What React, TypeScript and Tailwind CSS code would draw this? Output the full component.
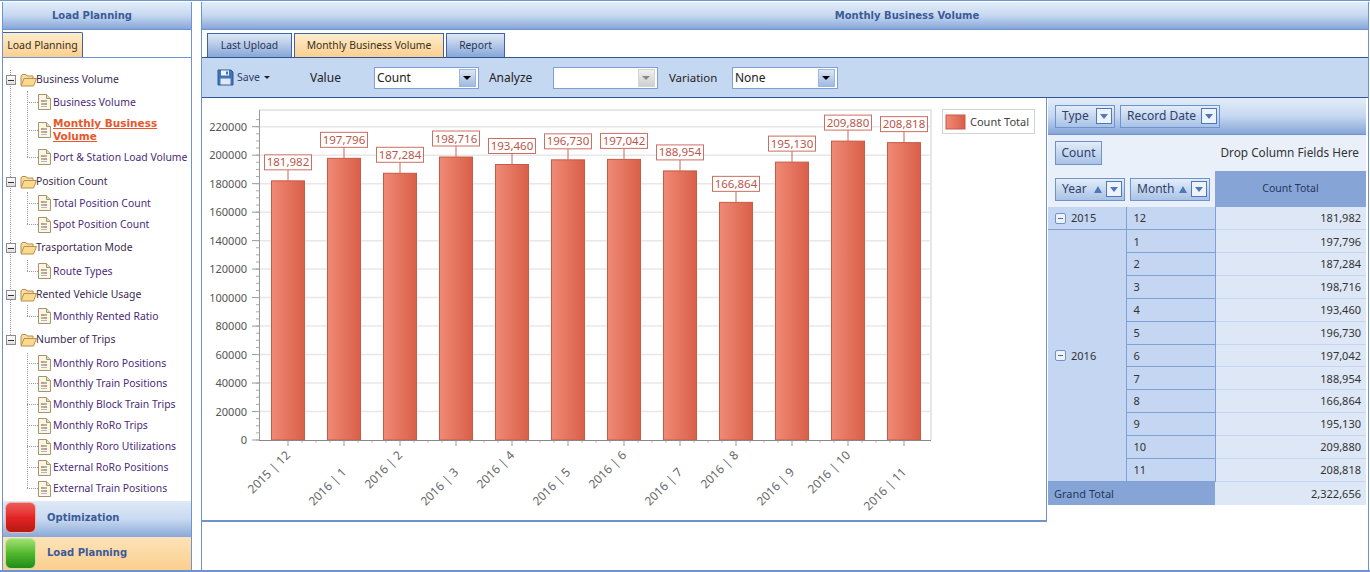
const headerBar =
  "bg-gradient-to-b from-[#e3edf9] via-[#c6d8f0] to-[#86a6d8] border-b border-[#6f93cc]";

const values = [
  { label: "2015 | 12", month: "12", n: 181982 },
  { label: "2016 | 1", month: "1", n: 197796 },
  { label: "2016 | 2", month: "2", n: 187284 },
  { label: "2016 | 3", month: "3", n: 198716 },
  { label: "2016 | 4", month: "4", n: 193460 },
  { label: "2016 | 5", month: "5", n: 196730 },
  { label: "2016 | 6", month: "6", n: 197042 },
  { label: "2016 | 7", month: "7", n: 188954 },
  { label: "2016 | 8", month: "8", n: 166864 },
  { label: "2016 | 9", month: "9", n: 195130 },
  { label: "2016 | 10", month: "10", n: 209880 },
  { label: "2016 | 11", month: "11", n: 208818 },
];

const tree = [
  {
    title: "Business Volume",
    cls: "h-[22px]",
    items: [
      { label: "Business Volume", cls: "h-[22px]" },
      { label: "Monthly Business Volume", cls: "mt-px h-[32px]", active: true },
      { label: "Port & Station Load Volume", cls: "h-[22px]" },
    ],
  },
  {
    title: "Position Count",
    cls: "mt-[3px] h-[22px]",
    items: [
      { label: "Total Position Count", cls: "-mt-px h-[22px]" },
      { label: "Spot Position Count", cls: "h-[21px]" },
    ],
  },
  {
    title: "Trasportation Mode",
    cls: "mt-[2px] h-[22px]",
    items: [{ label: "Route Types", cls: "mt-px h-[22px]" }],
  },
  {
    title: "Rented Vehicle Usage",
    cls: "mt-[2px] h-[22px]",
    items: [{ label: "Monthly Rented Ratio", cls: "-mt-px h-[22px]" }],
  },
  {
    title: "Number of Trips",
    cls: "mt-[2px] h-[22px]",
    items: [
      { label: "Monthly Roro Positions", cls: "mt-[2px] h-[20px]" },
      { label: "Monthly Train Positions", cls: "h-[21px]" },
      { label: "Monthly Block Train Trips", cls: "h-[21px]" },
      { label: "Monthly RoRo Trips", cls: "h-[21px]" },
      { label: "Monthly Roro Utilizations", cls: "h-[21px]" },
      { label: "External RoRo Positions", cls: "h-[21px]" },
      { label: "External Train Positions", cls: "h-[21px]" },
    ],
  },
];

const FolderIcon = () => (
  <svg width="17" height="14" viewBox="0 0 17 14" className="shrink-0">
    <path d="M1 12V3l1-1.500h4l1 1.500h6v2.500" fill="#f7dca6" stroke="#b98f4a" />
    <path d="M1 13l3-7.500h12.500L13.500 13z" fill="#fbd98e" stroke="#b98f4a" />
  </svg>
);

const DocIcon = () => (
  <svg width="13" height="16" viewBox="0 0 13 16" className="shrink-0">
    <path d="M.5.500h8l4 4v11H.5z" fill="#fbf6e6" stroke="#a89468" />
    <path d="M8.500.500v4h4" fill="#e8dcb8" stroke="#a89468" />
    <rect x="3" y="6" width="3" height="2" fill="#e58b8b" />
    <rect x="6" y="6" width="3" height="2" fill="#8fc7a0" />
    <rect x="3" y="9" width="3" height="2" fill="#8fc7a0" />
    <rect x="6" y="9" width="3" height="2" fill="#e58b8b" />
    <rect x="3" y="12" width="6" height="1" fill="#a7b7d8" />
  </svg>
);

const MinusBox = () => (
  <span className="relative z-10 flex size-[10px] shrink-0 items-center justify-center border border-[#8c8c8c] bg-gradient-to-b from-white to-[#dedede]">
    <span className="h-px w-[6px] bg-[#333]" />
  </span>
);

const SaveIcon = () => (
  <svg width="17" height="17" viewBox="0 0 17 17">
    <path d="M1 1h13l2 2v13H1z" fill="#3f74b8" stroke="#2d5a96" />
    <rect x="4" y="1.500" width="8" height="5" fill="#f0f5fb" />
    <rect x="9" y="2.500" width="2" height="3" fill="#3f74b8" />
    <rect x="3.500" y="9.500" width="10" height="6" fill="#dfe8f4" />
  </svg>
);

const Combo = ({ value, width, disabled }: { value: string; width: string; disabled?: boolean }) => (
  <div className={`${width} flex h-[22px] items-center border border-[#7f9fda] bg-white pr-[2px]`}>
    <span className="flex-1 pl-[2px] text-[12px] text-[#222]">{value}</span>
    <span
      className={`flex h-[18px] w-[17px] items-center justify-center border ${
        disabled
          ? "border-[#d5d5d5] bg-gradient-to-b from-[#f0f0f0] to-[#cfcfcf]"
          : "border-[#9db6de] bg-gradient-to-b from-[#dce7f6] to-[#9fb9e0]"
      }`}
    >
      <span
        className={`h-0 w-0 border-x-[4px] border-t-[4px] border-x-transparent ${
          disabled ? "border-t-[#8a8a8a]" : "border-t-black"
        }`}
      />
    </span>
  </div>
);

const FieldButton = ({ label, sort, width }: { label: string; sort?: boolean; width: string }) => (
  <div
    className={`${width} flex h-[23px] items-center border border-[#6f93cc] bg-gradient-to-b from-[#e3edf9] to-[#a9c2e6] pl-[6px] pr-[2px] text-[12px] text-[#30406a]`}
  >
    <span className="flex-1 whitespace-nowrap">{label}</span>
    {sort && <span className="mr-[4px] h-0 w-0 border-x-[4px] border-b-[7px] border-x-transparent border-b-[#4f78b8]" />}
    <span className="flex size-[16px] items-center justify-center border border-[#4f78b8] bg-[#eef3fb]">
      <span className="h-0 w-0 border-x-[4px] border-t-[5px] border-x-transparent border-t-[#4f78b8]" />
    </span>
  </div>
);

const Chart = () => {
  const zero = 342;
  const perUnit = 313.3 / 220000;
  const yOf = (v: number) => zero - v * perUnit;
  const ticks = Array.from({ length: 12 }, (_, i) => i * 20000);
  const minor = Array.from({ length: 46 }, (_, i) => i * 5000);
  return (
    <svg width="844" height="422" className="block">
      <defs>
        <linearGradient id="bar" x1="0" x2="1" y1="0" y2="0">
          <stop offset="0" stopColor="#f08a76" />
          <stop offset="1" stopColor="#d95f49" />
        </linearGradient>
      </defs>
      <path d="M57 12H729V342" fill="none" stroke="#e6e6e6" strokeWidth="2" />
      {ticks.map((v) => (
        <g key={v}>
          {v > 0 && <line x1="57" x2="729" y1={yOf(v)} y2={yOf(v)} stroke="#e8e8e8" strokeWidth="1.500" />}
          <line x1="50" x2="57" y1={yOf(v)} y2={yOf(v)} stroke="#999" />
          <text x="45" y={yOf(v) + 4} textAnchor="end" fontSize="11" fill="#555">
            {v}
          </text>
        </g>
      ))}
      {minor.map((v) => (
        <line key={v} x1="54" x2="57" y1={yOf(v)} y2={yOf(v)} stroke="#aaa" />
      ))}
      <line x1="57.500" x2="57.500" y1="12" y2="342" stroke="#999" />
      {values.map((d, i) => {
        const cx = 86 + i * 56;
        const top = yOf(d.n);
        const ly = i % 2 === 0 ? 358 : 375;
        return (
          <g key={d.label}>
            <rect x={cx - 16.500} y={top} width="33" height={zero - top} fill="url(#bar)" stroke="#c85a46" />
            <line x1={cx} x2={cx} y1={top - 11} y2={top} stroke="#c9675a" />
            <rect x={cx - 23.500} y={top - 26} width="47" height="15" fill="white" stroke="#cc6f62" />
            <text x={cx} y={top - 14.500} textAnchor="middle" fontSize="11.500" fill="#b9574a">
              {d.n.toLocaleString("en-US")}
            </text>
            <line x1={cx} x2={cx} y1="342" y2="348" stroke="#999" />
            {i < 11 && (
              <>
                <line x1={cx + 14} x2={cx + 14} y1="342" y2="345" stroke="#bbb" />
                <line x1={cx + 28} x2={cx + 28} y1="342" y2="345" stroke="#bbb" />
                <line x1={cx + 42} x2={cx + 42} y1="342" y2="345" stroke="#bbb" />
              </>
            )}
            <text
              x={cx + 3}
              y={ly}
              textAnchor="end"
              fontSize="12"
              fill="#666"
              transform={`rotate(-45 ${cx + 3} ${ly})`}
            >
              {d.label}
            </text>
          </g>
        );
      })}
      <line x1="57" x2="729" y1="342.500" y2="342.500" stroke="#888" />
      <rect x="740.500" y="11.500" width="92" height="24" fill="white" stroke="#d4d4d4" />
      <rect x="744" y="17" width="19" height="14" fill="url(#bar)" stroke="#c85a46" />
      <text x="768" y="28" fontSize="11" fill="#444">
        Count Total
      </text>
    </svg>
  );
};

const Pivot = () => (
  <div className="ml-px w-[318px] self-start">
    <div className={`${headerBar} flex h-[37px] items-center gap-[5px] pl-[7px]`}>
      <FieldButton label="Type" width="w-[60px]" />
      <FieldButton label="Record Date" width="w-[100px]" />
    </div>
    <div className="flex h-[36px] items-center justify-between bg-[#e9f0fa] px-[7px]">
      <span className="flex h-[24px] w-[47px] items-center justify-center border border-[#6f93cc] bg-gradient-to-b from-[#e3edf9] to-[#a9c2e6] text-[12px] text-[#30406a]">
        Count
      </span>
      <span className="text-[11.800px] text-[#333]">Drop Column Fields Here</span>
    </div>
    <div className="flex h-[36px] bg-[#e9f0fa]">
      <div className="flex w-[167px] items-center gap-[5px] pl-[7px]">
        <FieldButton label="Year" sort width="w-[70px]" />
        <FieldButton label="Month" sort width="w-[80px]" />
      </div>
      <div className="flex flex-1 items-center justify-center bg-[#86a5d6] text-[10.500px] text-[#27375c]">
        Count Total
      </div>
    </div>
    <table className="w-full table-fixed border-collapse text-[11px] text-[#333]">
      <colgroup>
        <col className="w-[78px]" />
        <col className="w-[89px]" />
        <col />
      </colgroup>
      <tbody>
        {values.map((d, i) => (
          <tr key={d.label} className="h-[22.850px]">
            {i < 2 && (
              <td rowSpan={i === 0 ? 1 : 11} className="border-b border-r border-[#7ea1d6] bg-[#c4d6f1] pl-[7px] pt-px">
                <span className="flex items-center gap-[5px]">
                  <span className="flex size-[11px] items-center justify-center rounded-[2px] border border-[#6f93cc] bg-[#eef3fb]">
                    <span className="h-px w-[5px] bg-[#4f6ea5]" />
                  </span>
                  {i === 0 ? "2015" : "2016"}
                </span>
              </td>
            )}
            <td className="border-b border-r border-[#7ea1d6] bg-[#c4d6f1] pl-[7px] pt-px">{d.month}</td>
            <td className="border-b border-[#c4d6f1] bg-[#dde7f6] pr-[5px] pt-px text-right">{d.n.toLocaleString("en-US")}</td>
          </tr>
        ))}
        <tr className="h-[24px]">
          <td colSpan={2} className="bg-[#86a5d6] pl-[6px] pt-[2px] text-[#27375c]">
            Grand Total
          </td>
          <td className="bg-[#dde7f6] pr-[5px] pt-[2px] text-right">2,322,656</td>
        </tr>
      </tbody>
    </table>
  </div>
);

export default function App() {
  return (
    <div className="flex h-[572px] w-[1370px] overflow-hidden border-y border-b-2 border-[#6f93cc] bg-white pt-px font-['Noto_Sans',sans-serif]">
      <aside className="ml-[2px] flex w-[190px] flex-col border-x border-[#6f93cc]">
        <div className={`${headerBar} flex h-[28px] shrink-0 items-center justify-center pr-[10px] font-['DejaVu_Sans',sans-serif] text-[10px] font-bold text-[#3c5a98]`}>
          Load Planning
        </div>
        <div className="flex h-[28px] shrink-0 items-end border-b border-[#6f93cc]">
          <span className="flex h-[25px] w-[80px] items-center justify-center rounded-tr-[2px] border-r border-t border-[#3f62a8] bg-gradient-to-b from-[#fdeccb] to-[#fbcf8f] pt-[2px] text-[10.500px] text-[#3a3020]">
            Load Planning
          </span>
        </div>
        <div className="relative flex-1 pl-[3px] pt-[11px]">
          <div className="absolute bottom-[162px] left-[7px] top-[12px] border-l border-dotted border-[#999]" />
          {tree.map((group) => (
            <div key={group.title}>
              <div className={`${group.cls} flex items-center text-[10.400px] text-[#3a2a50]`}>
                <MinusBox />
                <span className="ml-[4px]">
                  <FolderIcon />
                </span>
                <span className="-ml-px">{group.title}</span>
              </div>
              <div className="relative">
                <div className="absolute bottom-[11px] left-[21px] top-0 border-l border-dotted border-[#999]" />
                {group.items.map((item) => (
                  <div key={item.label} className={`${item.cls} flex items-center pl-[21px]`}>
                    <span className="h-0 w-[11px] shrink-0 border-t border-dotted border-[#999]" />
                    <DocIcon />
                    {item.active ? (
                      <span className="ml-[2px] whitespace-pre-line font-['DejaVu_Sans',sans-serif] text-[10.500px] font-bold leading-[13px] text-[#e8562a] underline">
                        {"Monthly Business\nVolume"}
                      </span>
                    ) : (
                      <span className="ml-[2px] text-[10.400px] leading-[13px] text-[#4b2a78]">{item.label}</span>
                    )}
                  </div>
                ))}
              </div>
            </div>
          ))}
        </div>
        <div className="flex h-[36px] shrink-0 items-start bg-gradient-to-b from-[#dfe9f7] via-[#c9daf1] to-[#8aa8d8]">
          <span className="ml-[2px] mt-px size-[31px] rounded-[6px] border border-[#f3b0a8] bg-gradient-to-b from-[#ea5a5a] via-[#e42424] to-[#b51a12]" />
          <span className="ml-[11px] self-center pb-[3px] font-['DejaVu_Sans',sans-serif] text-[10px] font-bold text-[#3c5a98]">Optimization</span>
        </div>
        <div className="flex h-[33px] shrink-0 items-start bg-gradient-to-b from-[#fde3b8] to-[#fbcf8f]">
          <span className="ml-[2px] mt-px size-[31px] rounded-[6px] border border-[#bfe6a0] bg-gradient-to-b from-[#a0e070] via-[#4fb82a] to-[#1c8c1c]" />
          <span className="ml-[11px] self-center pb-[3px] font-['DejaVu_Sans',sans-serif] text-[10px] font-bold text-[#3c5a98]">Load Planning</span>
        </div>
      </aside>

      <main className="ml-[9px] flex w-[1168px] flex-col border-x border-[#6f93cc]">
        <div className={`${headerBar} flex h-[28px] shrink-0 items-center justify-center pl-[244px] font-['DejaVu_Sans',sans-serif] text-[10px] font-bold text-[#3c5a98]`}>
          Monthly Business Volume
        </div>
        <div className="flex h-[27px] shrink-0 items-end gap-[2px] pl-[5px]">
          <span className="flex h-[24px] w-[85px] items-center justify-center border-x border-t border-[#3f62a8] bg-gradient-to-b from-[#dfe9f7] to-[#86a6d8] text-[10.300px] text-[#2a3350]">
            Last Upload
          </span>
          <span className="flex h-[24px] w-[150px] items-center justify-center border-x border-t border-[#3f62a8] bg-gradient-to-b from-[#fdeccb] to-[#fbcf8f] text-[10.300px] text-[#3a3020]">
            Monthly Business Volume
          </span>
          <span className="flex h-[24px] w-[59px] items-center justify-center border-x border-t border-[#3f62a8] bg-gradient-to-b from-[#dfe9f7] to-[#86a6d8] text-[10.300px] text-[#2a3350]">
            Report
          </span>
        </div>
        <div className="flex h-[41px] shrink-0 items-center border-y border-[#2f5597] bg-[#c5d8f1] pl-[15px] text-[12px] text-[#222]">
          <SaveIcon />
          <span className="ml-[3px] text-[10.500px] text-[#30406a]">Save</span>
          <span className="ml-[4px] h-0 w-0 border-x-[3px] border-t-[3px] border-x-transparent border-t-[#222]" />
          <span className="ml-[40px] w-[64px] pt-px">Value</span>
          <Combo value="Count" width="w-[105px]" />
          <span className="ml-[10px] w-[64px] pt-px">Analyze</span>
          <Combo value="" width="w-[105px]" disabled />
          <span className="ml-[11px] w-[63px] pt-px text-[11.500px]">Variation</span>
          <Combo value="None" width="w-[106px]" />
        </div>
        <div className="flex flex-1 items-start">
          <div className="w-[845px] border-b-2 border-r border-[#6f93cc]">
            <Chart />
          </div>
          <Pivot />
        </div>
      </main>
    </div>
  );
}
